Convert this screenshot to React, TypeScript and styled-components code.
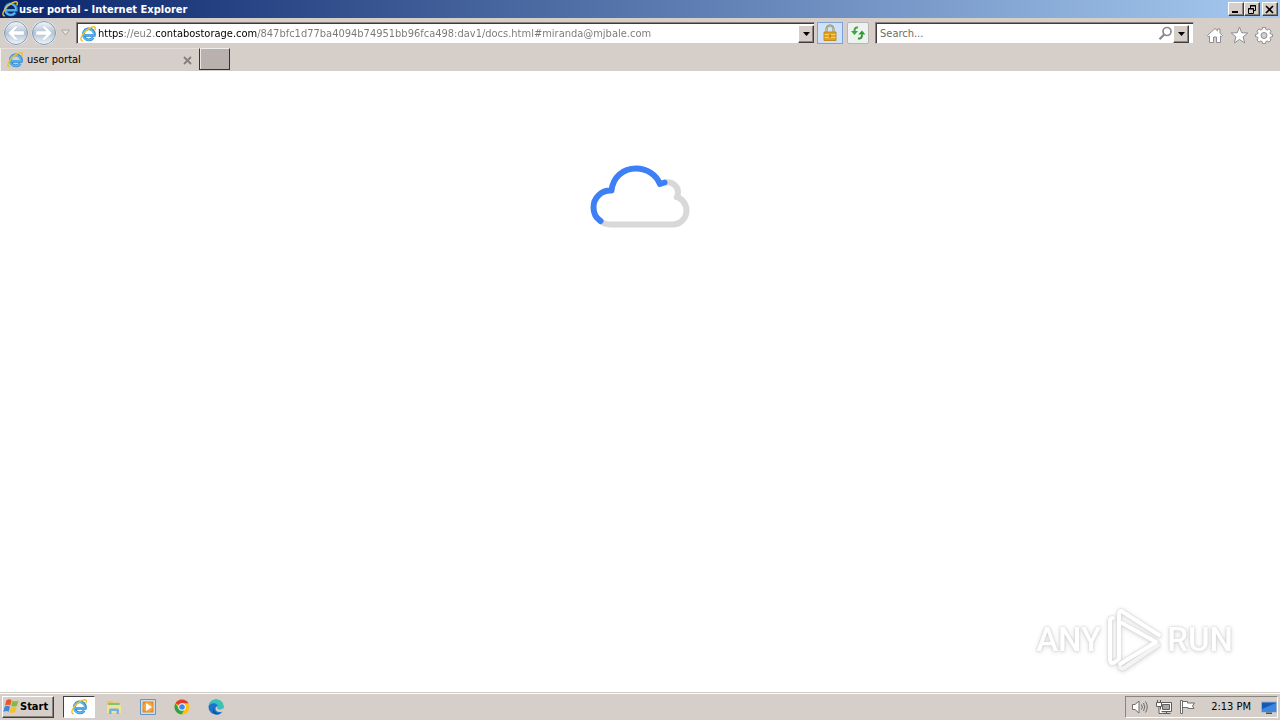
import React from "react";
import styled, { createGlobalStyle, css } from "styled-components";

const GlobalStyle = createGlobalStyle`
  * { box-sizing: border-box; }
  body { margin: 0; background: #fff; }
  body, button, input {
    font-family: "DejaVu Sans Condensed", "DejaVu Sans", sans-serif;
    font-size: 11px;
    line-height: 14px;
    color: #000;
  }
  button { padding: 0; margin: 0; cursor: default; }
  svg { display: block; flex: none; }
`;

const face = "#d6cec8";

const raised = css`
  border: 1px solid;
  border-color: #fff #404040 #404040 #fff;
  box-shadow: inset -1px -1px 0 #8a847e;
`;

const Desktop = styled.div`
  min-height: 100vh;
  display: flex;
  flex-direction: column;
`;

const TitleBar = styled.header`
  height: 18px;
  display: flex;
  align-items: center;
  gap: 1px;
  padding: 0 2px;
  background: linear-gradient(90deg, #0a246a, #a6caf0);
`;

const Title = styled.h1`
  flex: 1;
  margin: 0;
  color: #fff;
  font-size: 11px;
  line-height: 16px;
  padding-top: 2px;
  font-weight: 700;
  white-space: nowrap;
`;

const CaptionGroup = styled.div`
  display: flex;
`;

const CaptionButton = styled.button<{ $apart?: boolean }>`
  ${raised}
  width: 16px;
  height: 14px;
  margin-left: ${(p) => (p.$apart ? "2px" : "0")};
  display: grid;
  place-items: center;
  background: ${face};
`;

const NavBar = styled.nav`
  height: 30px;
  display: flex;
  align-items: center;
  padding: 0 7px 0 2px;
  background: ${face};
`;

const PlainButton = styled.button`
  border: 0;
  background: none;
  display: grid;
  place-items: center;
`;

const HistoryGroup = styled.div`
  display: flex;
  align-items: center;
  width: 74px;
`;

const Field = styled.div`
  height: 22px;
  display: flex;
  align-items: center;
  min-width: 0;
  background: #fff;
  border: 1px solid;
  border-color: #8a817c ${face} ${face} #8a817c;
  box-shadow: inset 1px 1px 0 #403a3c;
  padding: 1px 0 0 3px;
`;

const AddressField = styled(Field)`
  flex: 1;
`;

const SearchField = styled(Field)`
  flex: 0 1 319px;
  margin-left: 6px;
  padding-right: 4px;
`;

const TextInput = styled.input`
  flex: 1;
  min-width: 0;
  height: 16px;
  border: 0;
  outline: 0;
  padding: 0 1px;
  background: none;
  color: #6d6d6d;
  &::placeholder { color: #6d6d6d; opacity: 1; }
`;

/* The scheme and the domain are black, the rest of the address is grey. */
const UrlInput = styled(TextInput)`
  margin-left: 1px;
  background: linear-gradient(
    90deg,
    #000 27px, #777 27px, #777 58px, #000 58px, #000 160px, #777 160px
  );
  -webkit-background-clip: text;
  background-clip: text;
  -webkit-text-fill-color: transparent;
`;

const DropButton = styled.button`
  ${raised}
  width: 16px;
  height: 18px;
  display: grid;
  place-items: center;
  background: ${face};
`;

const LockButton = styled.button`
  width: 26px;
  height: 22px;
  margin-left: 2px;
  display: grid;
  place-items: center;
  border: 1px solid #7ba2dc;
  background: #cfe2fa;
`;

const RefreshButton = styled.button`
  width: 22px;
  height: 22px;
  margin-left: 4px;
  display: grid;
  place-items: center;
  border: 1px solid #b9b5b1;
  border-radius: 2px;
  background: #edf1f0;
`;

const ToolGroup = styled.div`
  display: flex;
  gap: 6px;
  margin-left: 12px;
  padding-top: 3px;
`;

const TabBar = styled.div`
  height: 23px;
  display: flex;
  background: ${face};
`;

const Tab = styled.div`
  width: 199px;
  display: flex;
  align-items: center;
  gap: 4px;
  padding: 0 7px 0 6px;
  border-left: 1px solid #f4f1ee;
  border-top: 1px solid #e4dfda;
`;

const TabLabel = styled.span`
  flex: 1;
`;

const NewTab = styled.button`
  width: 31px;
  height: 22px;
  border: 1px solid #333;
  border-top-color: #eee;
  background: #b9b1ae;
  box-shadow: inset 1px 0 0 #ece7e3;
`;

const Page = styled.main`
  flex: 1;
  position: relative;
  display: flex;
  justify-content: center;
  padding-top: 94px;
  background: #fff;
`;

const Watermark = styled.div`
  position: absolute;
  right: 47px;
  bottom: 21px;
  display: flex;
  align-items: center;
  gap: 5px;
  filter: drop-shadow(0 0 1px #ccc) drop-shadow(0 1px 2px #ddd);
`;

const Word = styled.span`
  font-family: Roboto, sans-serif;
  font-size: 33px;
  line-height: 44px;
  font-weight: 500;
  color: #fff;
`;

const TaskBar = styled.footer`
  height: 28px;
  display: flex;
  align-items: center;
  padding: 0 2px;
  background: ${face};
  border-top: 1px solid #d0cac4;
  box-shadow: inset 0 1px 0 #fff;
`;

const StartButton = styled.button`
  ${raised}
  width: 52px;
  height: 22px;
  display: flex;
  align-items: center;
  background: ${face};
  font-weight: 700;
`;

const TaskButton = styled.button<{ $active?: boolean }>`
  width: ${(p) => (p.$active ? "32px" : "34px")};
  height: 22px;
  display: grid;
  place-items: center;
  border: 1px solid transparent;
  background: none;
  ${(p) =>
    p.$active &&
    css`
      margin: 0 2px 0 9px;
      background: #fff;
      border-color: #404040 #fff #fff #404040;
    `}
`;

const Tray = styled.div`
  margin-left: auto;
  height: 22px;
  display: flex;
  align-items: center;
  gap: 7px;
  padding: 0 0 0 5px;
  border: 1px solid;
  border-color: #8a847e #fff #fff #8a847e;
`;

const Clock = styled.time`
  margin: 0 2px 0 8px;
  white-space: nowrap;
`;

const IeIcon = ({ size = 16 }: { size?: number }) => (
  <svg width={size} height={size} viewBox="0 0 16 16" fill="none">
    <path d="M4 9.300H14.300A5.500 5.500 0 1013.300 11.600" stroke="#2c86d0" strokeWidth="2.800" />
    <path d="M4 9.100H14A5.500 5.500 0 1013 11.800" stroke="#5bb9f0" strokeWidth="1.500" />
    <path d="M2.800 15C-.6 14.500.9 9.600 5 5.700 9 1.900 14.300-.6 15.200 1.600c.3.900 0 1.900-.5 2.900" stroke="#edc22f" strokeWidth="1.400" />
  </svg>
);

const Arrow = ({ forward }: { forward?: boolean }) => (
  <svg width="28" height="28" viewBox="0 0 28 28">
    <defs>
      <linearGradient id={forward ? "orbF" : "orbB"} x1="0" y1="0" x2="0" y2="1">
        <stop offset="0" stopColor="#f3f6f9" />
        <stop offset=".5" stopColor="#b3c2d4" />
        <stop offset="1" stopColor="#f0f7fb" />
      </linearGradient>
    </defs>
    <circle cx="14" cy="14" r="13" fill="#f3f3f3" stroke="#cfcdcc" />
    <circle cx="14" cy="14" r="11.500" fill={`url(#${forward ? "orbF" : "orbB"})`} stroke="#8298b0" />
    <path
      transform={forward ? "matrix(-1 0 0 1 28 0)" : undefined}
      d="M6 14l7-7h3.500l-4.500 5h10v4H12l4.500 5H13z"
      fill="#fff" stroke="#b3c0ce" strokeWidth=".4"
    />
  </svg>
);

const DownArrow = () => (
  <svg width="7" height="4" viewBox="0 0 7 4"><path d="M0 0h7L3.500 4z" fill="#000" /></svg>
);

const Flag = () => (
  <svg width="17" height="17" viewBox="0 0 17 17">
    <path d="M3.400 2.200c2-1.300 3.500-1 5.200 0L7.300 7.500c-1.700-1-3.400-1-5.300.100z" fill="#e8572a" />
    <path d="M9.400 2.700c2 1 3.800.8 6-.3L14 7.700c-2 1.100-3.900 1.200-5.800.2z" fill="#86b93c" />
    <path d="M1.800 8.500c1.900-1.100 3.600-1.100 5.200-.1l-1.300 5.400c-1.600-1-3.400-1-5.400.1z" fill="#3f86d6" />
    <path d="M7.900 8.900c2 1 3.800.9 5.900-.2l-1.400 5.400c-2.100 1.100-4 1.200-5.900.2z" fill="#f6c12c" />
  </svg>
);

const Cloud = () => (
  <svg width="100" height="63" viewBox="0 0 100 63" fill="none" strokeWidth="6" strokeLinejoin="round" strokeLinecap="round" role="img" aria-label="Loading">
    <path d="M76 17.500C82 16.500 88 21 88 27c0 2-.4 3.500-1.200 5.200C92 33.500 96.500 39 96.500 45.500c0 8-6.500 14-14 14H20c-4 0-7-1-9.500-3.500" stroke="#d8d8d8" />
    <path d="M10.500 56C6 53 3.500 48 3.500 42.500c0-10 8-17.500 18-17C23 12 33 3.500 46 3.500c11 0 20 6 24 15.500l4.500-1.500" stroke="#3d7ff5" />
  </svg>
);

const PlayLogo = () => (
  <svg width="56" height="62" viewBox="0 0 56 62" fill="none" strokeLinejoin="round" strokeLinecap="round">
    <path d="M4 50V12c0-2 1-3 3-3M4 50c0 4 2 5 5 3l4-3" stroke="#fff" strokeWidth="4" />
    <path d="M13 48V5c0-3 2-4 4-2l36 23" stroke="#fff" strokeWidth="4" />
    <path d="M16 14l34 19-36 22" stroke="#fff" strokeWidth="4" />
    <path d="M14 58c1 2 2 2 4 1l34-23" stroke="#f4f4f4" strokeWidth="4" />
  </svg>
);

export default function App() {
  return (
    <Desktop>
      <GlobalStyle />
      <TitleBar>
        <IeIcon />
        <Title>user portal - Internet Explorer</Title>
        <CaptionGroup>
          <CaptionButton aria-label="Minimize">
            <svg width="10" height="9" viewBox="0 0 10 9"><path d="M1 6h6v2H1z" /></svg>
          </CaptionButton>
          <CaptionButton aria-label="Restore">
            <svg width="10" height="9" viewBox="0 0 10 9" fill="none" stroke="#000">
              <path d="M3.500 3V.5h5v5H7M3 1h6M1.500 3.500h5v5h-5zM1 4h6" />
            </svg>
          </CaptionButton>
          <CaptionButton $apart aria-label="Close">
            <svg width="10" height="9" viewBox="0 0 10 9"><path d="M1 1l7 7M8 1L1 8" stroke="#000" strokeWidth="1.600" /></svg>
          </CaptionButton>
        </CaptionGroup>
      </TitleBar>

      <NavBar aria-label="Navigation">
        <HistoryGroup>
          <PlainButton aria-label="Back"><Arrow /></PlainButton>
          <PlainButton aria-label="Forward"><Arrow forward /></PlainButton>
          <PlainButton aria-label="Recent pages">
            <svg width="15" height="8" viewBox="0 0 15 8"><path d="M3.500 1h8l-4 5z" fill="#e5e2df" stroke="#aaa5a0" /></svg>
          </PlainButton>
        </HistoryGroup>
        <AddressField>
          <IeIcon />
          <UrlInput
            aria-label="Address"
            spellCheck={false}
            defaultValue="https://eu2.contabostorage.com/847bfc1d77ba4094b74951bb96fca498:dav1/docs.html#miranda@mjbale.com"
          />
          <DropButton aria-label="Show addresses"><DownArrow /></DropButton>
        </AddressField>
        <LockButton aria-label="Security report">
          <svg width="16" height="18" viewBox="0 0 16 18">
            <path d="M4.500 8V5a3.500 3.500 0 017 0v3" fill="none" stroke="#8d8558" strokeWidth="2" />
            <path d="M4.500 8V5a3.500 3.500 0 017 0v3" fill="none" stroke="#dcd6ac" strokeWidth=".7" />
            <path d="M2 8h12v8.500H2z" fill="#e3a51d" stroke="#b87c14" strokeWidth=".8" />
            <path d="M2.500 10.500h11M2.500 13.500h11" stroke="#f5cf5a" />
            <path d="M8 10v4" stroke="#a86b10" />
          </svg>
        </LockButton>
        <RefreshButton aria-label="Refresh">
          <svg width="16" height="16" viewBox="0 0 16 16" fill="none">
            <path d="M8 2.500C5.500 2 4.500 3.500 4.500 6" stroke="#3da53d" strokeWidth="2" />
            <path d="M1 6h7l-3.500 4z" fill="#3da53d" />
            <path d="M8 13.500c3 .5 4-1 4-4" stroke="#2f9434" strokeWidth="2" />
            <path d="M8.300 9.500h7L12 5.500z" fill="#2f9434" />
          </svg>
        </RefreshButton>
        <SearchField>
          <TextInput aria-label="Search" placeholder="Search..." />
          <PlainButton aria-label="Go">
            <svg width="15" height="15" viewBox="0 0 15 15" fill="none" stroke="#8a8a90">
              <circle cx="9" cy="5.500" r="4" strokeWidth="1.700" />
              <path d="M6.200 8.500L1.500 13.300" strokeWidth="2.300" />
            </svg>
          </PlainButton>
          <DropButton aria-label="Search options"><DownArrow /></DropButton>
        </SearchField>
        <ToolGroup>
          <PlainButton aria-label="Home">
            <svg width="18" height="18" viewBox="0 0 18 18" fill="#fff" stroke="#8d8d93">
              <path d="M1.500 9.500L9 2.500l2.500 2.300V3h2.500v4.200l2.500 2.300-1 1L14.500 10v6.500h-4V11h-3v5.500h-4V10l-1 .8z" />
            </svg>
          </PlainButton>
          <PlainButton aria-label="Favorites">
            <svg width="19" height="18" viewBox="0 0 19 18" fill="#fff" stroke="#8d8d93">
              <path d="M9.500 1l2.200 5.700 6.100.3-4.700 3.900 1.600 6-5.200-3.400-5.200 3.400 1.600-6L1.200 7l6.100-.3z" />
            </svg>
          </PlainButton>
          <PlainButton aria-label="Tools">
            <svg width="18" height="18" viewBox="0 0 18 18" stroke="#8d8d93">
              <path
                d="M7.500 1.500h3l.4 2 1.300.5 1.700-1.100 2.200 2.200L15 6.800l.5 1.200 2 .4v2.200l-2 .4-.5 1.300 1.100 1.700-2.200 2.100-1.700-1.100-1.300.5-.4 2h-3l-.4-2-1.300-.5-1.700 1.100-2.200-2.100L3 12.300 2.500 11l-2-.4V8.400l2-.4L3 6.800 1.900 5.100l2.200-2.200L5.800 4l1.300-.5z"
                fill="#fff"
              />
              <circle cx="9" cy="9.500" r="3" fill={face} />
            </svg>
          </PlainButton>
        </ToolGroup>
      </NavBar>

      <TabBar>
        <Tab>
          <IeIcon />
          <TabLabel>user portal</TabLabel>
          <PlainButton aria-label="Close tab">
            <svg width="9" height="9" viewBox="0 0 9 9"><path d="M1 1l7 7M8 1L1 8" stroke="#85807c" strokeWidth="1.800" /></svg>
          </PlainButton>
        </Tab>
        <NewTab aria-label="New tab" />
      </TabBar>

      <Page>
        <Cloud />
        <Watermark>
          <Word>ANY</Word>
          <PlayLogo />
          <Word>RUN</Word>
        </Watermark>
      </Page>

      <TaskBar>
        <StartButton><Flag />Start</StartButton>
        <TaskButton $active aria-label="Internet Explorer"><IeIcon /></TaskButton>
        <TaskButton aria-label="File Explorer">
          <svg width="16" height="16" viewBox="0 0 16 16">
            <path d="M1 2h5l1 1.500h7V14H1z" fill="#e9c55c" />
            <path d="M2.500 4h11v3h-11z" fill="#7fc27d" />
            <path d="M1 6h14v8H1z" fill="#f7e08f" />
            <path d="M3 15V11q0-1.500 1.500-1.500h7Q13 9.500 13 11v4h-2.500v-3h-5v3z" fill="#6db5e2" />
          </svg>
        </TaskButton>
        <TaskButton aria-label="Media Player">
          <svg width="16" height="16" viewBox="0 0 16 16">
            <path d="M.5.500h15v15H.500z" fill="#c7def2" stroke="#5f98ca" />
            <path d="M2.500 2.500h11v11h-11z" fill="#f08a1c" />
            <circle cx="8" cy="8" r="4.800" fill="#f5a63e" />
            <path d="M6 4l6 4-6 4z" fill="#fff" />
          </svg>
        </TaskButton>
        <TaskButton aria-label="Chrome">
          <svg width="16" height="16" viewBox="0 0 16 16">
            <circle cx="8" cy="8" r="7.500" fill="#fbc116" />
            <path d="M8 8L1.500 4.200A7.500 7.500 0 0114.500 4.200H8z" fill="#e33b2e" />
            <path d="M1.500 4.200A7.500 7.500 0 007.500 15.500L11 9.800 8 8 4.700 9.800z" fill="#2da24c" />
            <circle cx="8" cy="8" r="3.700" fill="#fff" />
            <circle cx="8" cy="8" r="2.800" fill="#4285f4" />
          </svg>
        </TaskButton>
        <TaskButton aria-label="Edge">
          <svg width="16" height="16" viewBox="0 0 16 16">
            <circle cx="8" cy="8" r="7.500" fill="#1b74c9" />
            <path d="M.6 7.500C1.300 3 4.500.5 8.300.5c4.200 0 7.200 3 7.200 6.300 0 2.300-1.700 3.700-3.900 3.700-1.600 0-2.300-.6-2.300-1.200 0-.6.500-.8.500-2 0-1.700-1.700-3.100-4-3.100C3.300 4.200 1.500 5.600.6 7.500z" fill="#39c2b8" />
            <path d="M5.500 8.500c-.5 3 2 5.800 5 5.800 1.500 0 2.800-.5 4-1.600C13 14.700 10.800 15.700 8.500 15.500 5.500 15 3.800 12 5.500 8.500z" fill="#124f9d" />
            <path d="M9.300 9.300c0 .6.700 1.200 2.300 1.200 1.500 0 2.800-.6 3.500-1.700l.4 2.700c-1 1-2.300 1.500-4 1.500-2.500 0-4.200-1.700-4-3.800.200-1 1-1.800 2-2 .6 1-.2 1.300-.2 2.100z" fill="#d6cec8" />
          </svg>
        </TaskButton>
        <Tray>
          <svg width="18" height="16" viewBox="0 0 18 16" fill="none" stroke="#6f6d6b">
            <path d="M1.500 5.500H4L8 2v12l-4-3.500H1.500z" fill="#fff" />
            <path d="M10.500 5.500q1.500 2.500 0 5M12.500 4q2.500 4 0 8M14.500 2.500q3.500 5.500 0 11" />
          </svg>
          <svg width="16" height="16" viewBox="0 0 16 16" fill="#fff" stroke="#5f5d5b">
            <path d="M4.500 3.500h11v9h-11z" />
            <path d="M6.500 5.500h7v5h-7z" fill="#aaa6a2" />
            <path d="M6.500 14.500h8M10.500 12.500v2M.5 3.500h5v4h-5zM1.500 1v2.500M4.500 1v2.500M3 7.500v7h3.500" />
          </svg>
          <svg width="17" height="16" viewBox="0 0 17 16" fill="#fff" stroke="#6f6d6b">
            <path d="M1.500 1.500h2v13h-2zM3.500 2.500h5v1.500h7l-2 3 1.500 2.500h-6V8.500H3.500z" />
          </svg>
          <Clock>2:13 PM</Clock>
          <svg width="17" height="16" viewBox="0 0 17 16">
            <path d="M1.500 3h15v10h-15z" fill="#1757b5" stroke="#8fb2dc" />
            <path d="M2 10L16 4v8H2z" fill="#3c86dc" />
            <path d="M6 13.500h6v1.500H6z" fill="#494d55" />
          </svg>
        </Tray>
      </TaskBar>
    </Desktop>
  );
}
